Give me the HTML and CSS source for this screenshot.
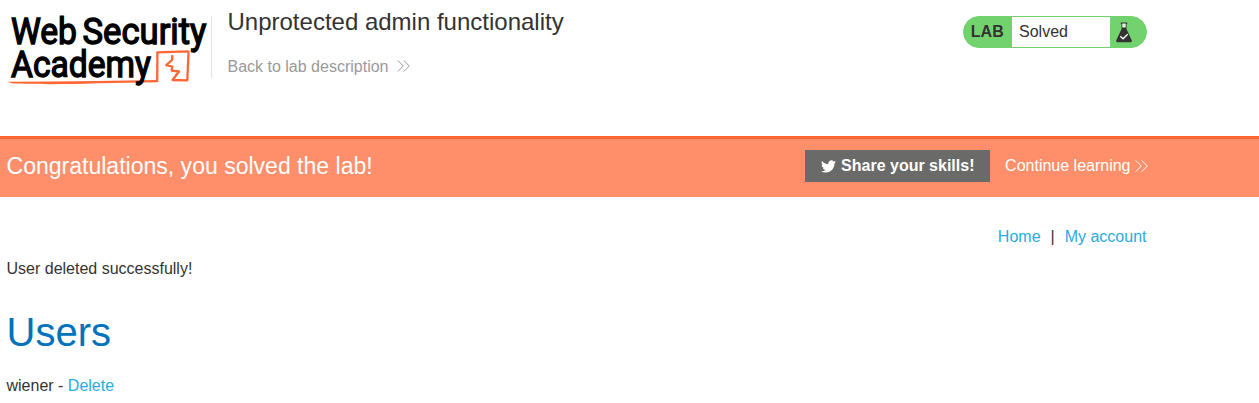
FILE: index.html
```html
<!DOCTYPE html>
<html lang="en">
<head>
<meta charset="utf-8">
<title>Unprotected admin functionality</title>
<link rel="stylesheet" href="styles.css">
</head>
<body>
<header class="lab-header">
  <div class="container header-row">
    <svg class="logo" viewBox="0 0 204.500 80" role="img" aria-label="Web Security Academy">
      <g class="logo-mark">
        <path d="M0 71.800 C30 71.300 60 71.500 90 71 L150 70 V72.300 L90 73.300 C60 74.500 25 74.300 6 73.600 Z" class="fill"/>
        <path d="M150.200 71 L150.400 42.300 L181 41.300 L181.500 43 L180.300 70.300 L165.500 70 L172 61.500 L164.800 60.700 L165.200 56.500 L159.300 55.200 L165 50 L165.300 46"/>
      </g>
      <g class="logo-text">
        <text x="4" y="34.300" textLength="66" lengthAdjust="spacingAndGlyphs">Web</text>
        <text x="75.500" y="34.300" textLength="124" lengthAdjust="spacingAndGlyphs">Security</text>
        <text x="4" y="66.800" textLength="140" lengthAdjust="spacingAndGlyphs">Academy</text>
      </g>
    </svg>
    <div class="title">
      <h2>Unprotected admin functionality</h2>
      <a class="back" href="#">Back to lab description
        <svg class="chevrons" viewBox="0 0 13 12"><path d="M.8 .5 6.300 6 .8 11.500M6.800 .5 12.300 6 6.800 11.500"/></svg>
      </a>
    </div>
    <div class="status">
      <span class="status-tag">LAB</span>
      <span class="status-text">Solved</span>
      <span class="status-icon">
        <svg viewBox="0 0 18 21"><path class="flask" d="M5.800 .5H12.200V2H11.500V7L16.800 18.500Q17.300 20.300 15.500 20.300H2.500Q.7 20.300 1.200 18.500L6.500 7V2H5.800Z"/><path class="neck" d="M7.300 1.500H10.700V5.500H7.300Z"/><path class="tick" d="M5.300 14.300 8 16.800 12.700 12.200"/></svg>
      </span>
    </div>
  </div>
</header>
<section class="banner">
  <div class="container banner-row">
    <h4>Congratulations, you solved the lab!</h4>
    <a class="share" href="#"><svg viewBox="0 0 24 24"><path d="M23.950 4.570a10 10 0 0 1-2.820.77 4.960 4.960 0 0 0 2.160-2.720c-.95.550-2 .960-3.130 1.180a4.920 4.920 0 0 0-8.380 4.480C7.690 8.090 4.070 6.130 1.640 3.160a4.820 4.820 0 0 0-.67 2.480c0 1.710.87 3.210 2.190 4.100a4.900 4.900 0 0 1-2.230-.62v.06a4.920 4.920 0 0 0 3.950 4.830 5 5 0 0 1-2.210.08 4.940 4.940 0 0 0 4.600 3.420A9.870 9.870 0 0 1 0 19.540a14 14 0 0 0 7.550 2.210c9.050 0 14-7.500 14-13.990 0-.21 0-.42-.02-.63a9.940 9.940 0 0 0 2.460-2.550z"/></svg>Share your skills!</a>
    <a class="continue" href="#">Continue learning<svg class="chevrons" viewBox="0 0 13 12"><path d="M.8 .5 6.300 6 .8 11.500M6.800 .5 12.300 6 6.800 11.500"/></svg></a>
  </div>
</section>
<main class="container">
  <nav class="links"><a href="#">Home</a><span>|</span><a href="#">My account</a></nav>
  <p class="message">User deleted successfully!</p>
  <h1>Users</h1>
  <p class="user">wiener - <a href="#">Delete</a></p>
</main>
</body>
</html>
```
FILE: styles.css
```css
* { box-sizing: border-box; }
body { margin: 0; background: #fff; color: #333332; font: 16px/20px "Liberation Sans", Arial, sans-serif; overflow: hidden; }
h1, h2, h4, p { margin: 0; font-weight: 400; }
a { color: #29abe2; text-decoration: none; }
.container { width: 1140px; margin-left: 6.500px; }
.lab-header { height: 136px; }
.header-row { display: flex; align-items: flex-start; }
.logo { width: 204.500px; height: 80px; margin-top: 10px; flex: none; overflow: visible; }
.logo-mark path { fill: none; stroke: #ff6633; stroke-width: 2.300; stroke-linejoin: round; stroke-linecap: round; }
.logo-mark .fill { fill: #ff6633; stroke: none; }
.logo-text { font: 400 37.500px Roboto, sans-serif; fill: #000; stroke: #000; stroke-width: 1.400px; }
.title { flex: 1; height: 62px; margin-top: 16px; padding-left: 15.500px; border-left: 1px solid #e2e2e2; }
.title h2 { font-size: 24px; line-height: 28px; margin-top: -8px; }
.back { display: flex; align-items: center; gap: 8.500px; margin-top: 21px; color: #999; }
.back .chevrons { margin-top: -2px; }
.chevrons { width: 13px; height: 12px; fill: none; stroke: currentColor; stroke-width: 1; }
.status { display: flex; width: 184px; height: 32px; margin-top: 16px; border: 1px solid #72d36e; border-radius: 16px; background: #72d36e; overflow: hidden; line-height: 30px; }
.status-tag { width: 48px; padding-left: 7.300px; font-weight: 700; }
.status-text { width: 98px; padding-left: 7.500px; background: #fff; }
.status-icon { padding: 5px 0 0 5px; }
.status-icon svg { display: block; width: 18px; height: 21px; }
.flask { fill: #333332; }
.neck { fill: #e8f4e6; }
.tick { fill: none; stroke: #fff; stroke-width: 1.400; }
.banner { height: 61px; border-top: 3px solid #ff6633; background: #ff8f6b; color: #fff; }
.banner-row { display: flex; align-items: center; padding-top: 11px; }
.banner h4 { flex: 1; font-size: 23.040px; line-height: 32px; }
.share { display: flex; align-items: center; width: 185px; height: 32px; padding-left: 16px; gap: 5.500px; background: #6a6a68; color: #fff; font-weight: 700; white-space: nowrap; }
.share svg { width: 15px; height: 15px; fill: #fff; }
.continue { display: flex; align-items: center; margin-left: 15.500px; margin-right: -1px; gap: 4px; color: #fff; }
.links { display: flex; justify-content: flex-end; gap: 10px; padding-top: 30px; }
.message { margin-top: 12px; }
h1 { margin-top: 29px; color: #0071bc; font-size: 40px; line-height: 48px; }
.user { margin-top: 20px; }
```
